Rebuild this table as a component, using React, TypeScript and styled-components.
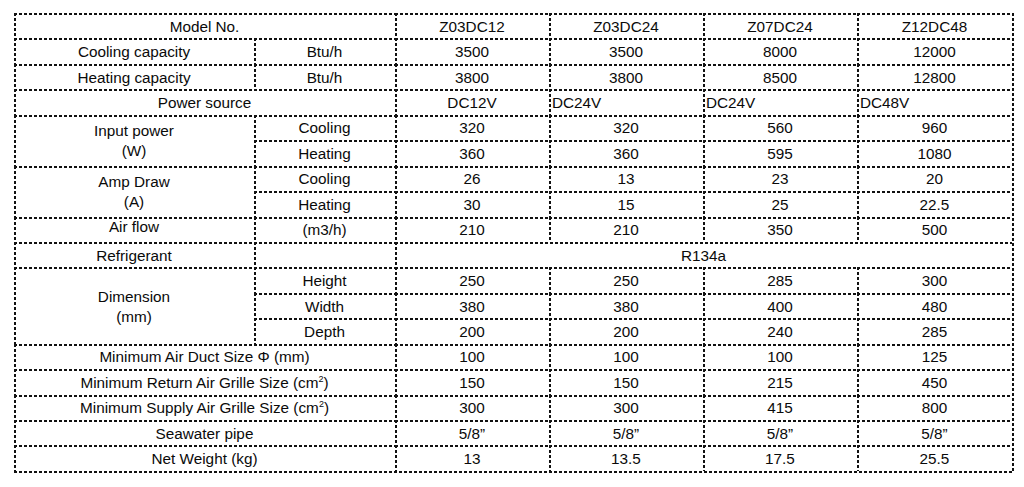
import * as React from "react";
import styled, { createGlobalStyle } from "styled-components";

const ink = "#111111";

const dashAcross = `repeating-linear-gradient(to right, ${ink} 0 3px, transparent 3px 5px)`;
const dashDown = `repeating-linear-gradient(to bottom, ${ink} 0 3px, transparent 3px 5px)`;

const GlobalStyle = createGlobalStyle`
  html, body {
    margin: 0;
    background: #ffffff;
  }
  body {
    font-family: "Liberation Sans", Arial, sans-serif;
    color: #0a0a0a;
  }
`;

const Page = styled.div`
  width: 1024px;
  height: 487px;
  box-sizing: border-box;
  padding: 13px 0 0 14px;
`;

const SpecTable = styled.div`
  display: grid;
  grid-template-columns: 240px 141px 154px 154px 154px 155px;
  grid-auto-rows: 25.45px;
  width: 998px;
  padding: 0 2px 2px 0;
  background-image: ${dashAcross}, ${dashDown};
  background-size: 100% 2px, 2px 100%;
  background-position: left bottom, right top;
  background-repeat: no-repeat;
`;

const Cell = styled.div<{
  $span: number;
  $rows: number;
  $align: "left" | "center";
  $lift: number;
}>`
  grid-column: span ${(p) => p.$span};
  grid-row: span ${(p) => p.$rows};
  display: flex;
  flex-direction: column;
  justify-content: center;
  align-items: ${(p) => (p.$align === "left" ? "flex-start" : "center")};
  padding: 2px 0 ${(p) => p.$lift}px ${(p) => (p.$align === "left" ? 3 : 0)}px;
  box-sizing: border-box;
  font-size: 15.3px;
  line-height: 20px;
  white-space: nowrap;
  background-image: ${dashAcross}, ${dashDown};
  background-size: 100% 2px, 2px 100%;
  background-position: left top, left top;
  background-repeat: no-repeat;
`;

const Sup = styled.sup`
  font-size: 9px;
  line-height: 0;
  vertical-align: 6px;
`;

type Spec = {
  text?: React.ReactNode;
  span?: number;
  rows?: number;
  align?: "left" | "center";
  lift?: number;
};

const vals = (...items: string[]): Spec[] => items.map((text) => ({ text }));

const cm2 = (
  <>
    cm<Sup>2</Sup>
  </>
);

const table: Spec[] = [
  { text: "Model No.", span: 2 },
  ...vals("Z03DC12", "Z03DC24", "Z07DC24", "Z12DC48"),

  { text: "Cooling capacity" },
  { text: "Btu/h" },
  ...vals("3500", "3500", "8000", "12000"),

  { text: "Heating capacity" },
  { text: "Btu/h" },
  ...vals("3800", "3800", "8500", "12800"),

  { text: "Power source", span: 2 },
  { text: "DC12V" },
  { text: "DC24V", align: "left" },
  { text: "DC24V", align: "left" },
  { text: "DC48V", align: "left" },

  {
    text: (
      <>
        <span>Input power</span>
        <span>(W)</span>
      </>
    ),
    rows: 2,
  },
  { text: "Cooling" },
  ...vals("320", "320", "560", "960"),
  { text: "Heating" },
  ...vals("360", "360", "595", "1080"),

  {
    text: (
      <>
        <span>Amp Draw</span>
        <span>(A)</span>
      </>
    ),
    rows: 2,
  },
  { text: "Cooling" },
  ...vals("26", "13", "23", "20"),
  { text: "Heating" },
  ...vals("30", "15", "25", "22.5"),

  { text: "Air flow", lift: 6 },
  { text: "(m3/h)" },
  ...vals("210", "210", "350", "500"),

  { text: "Refrigerant" },
  { text: "" },
  { text: "R134a", span: 4 },

  {
    text: (
      <>
        <span>Dimension</span>
        <span>(mm)</span>
      </>
    ),
    rows: 3,
  },
  { text: "Height" },
  ...vals("250", "250", "285", "300"),
  { text: "Width" },
  ...vals("380", "380", "400", "480"),
  { text: "Depth" },
  ...vals("200", "200", "240", "285"),

  { text: "Minimum Air Duct Size Φ (mm)", span: 2 },
  ...vals("100", "100", "100", "125"),

  { text: <span>Minimum Return Air Grille Size ({cm2})</span>, span: 2 },
  ...vals("150", "150", "215", "450"),

  { text: <span>Minimum Supply Air Grille Size ({cm2})</span>, span: 2 },
  ...vals("300", "300", "415", "800"),

  { text: "Seawater pipe", span: 2 },
  ...vals("5/8”", "5/8”", "5/8”", "5/8”"),

  { text: "Net Weight (kg)", span: 2 },
  ...vals("13", "13.5", "17.5", "25.5"),
];

export default function App() {
  return (
    <>
      <GlobalStyle />
      <Page>
        <SpecTable>
          {table.map((c, i) => (
            <Cell
              key={i}
              $span={c.span ?? 1}
              $rows={c.rows ?? 1}
              $align={c.align ?? "center"}
              $lift={c.lift ?? 0}
            >
              {c.text}
            </Cell>
          ))}
        </SpecTable>
      </Page>
    </>
  );
}
